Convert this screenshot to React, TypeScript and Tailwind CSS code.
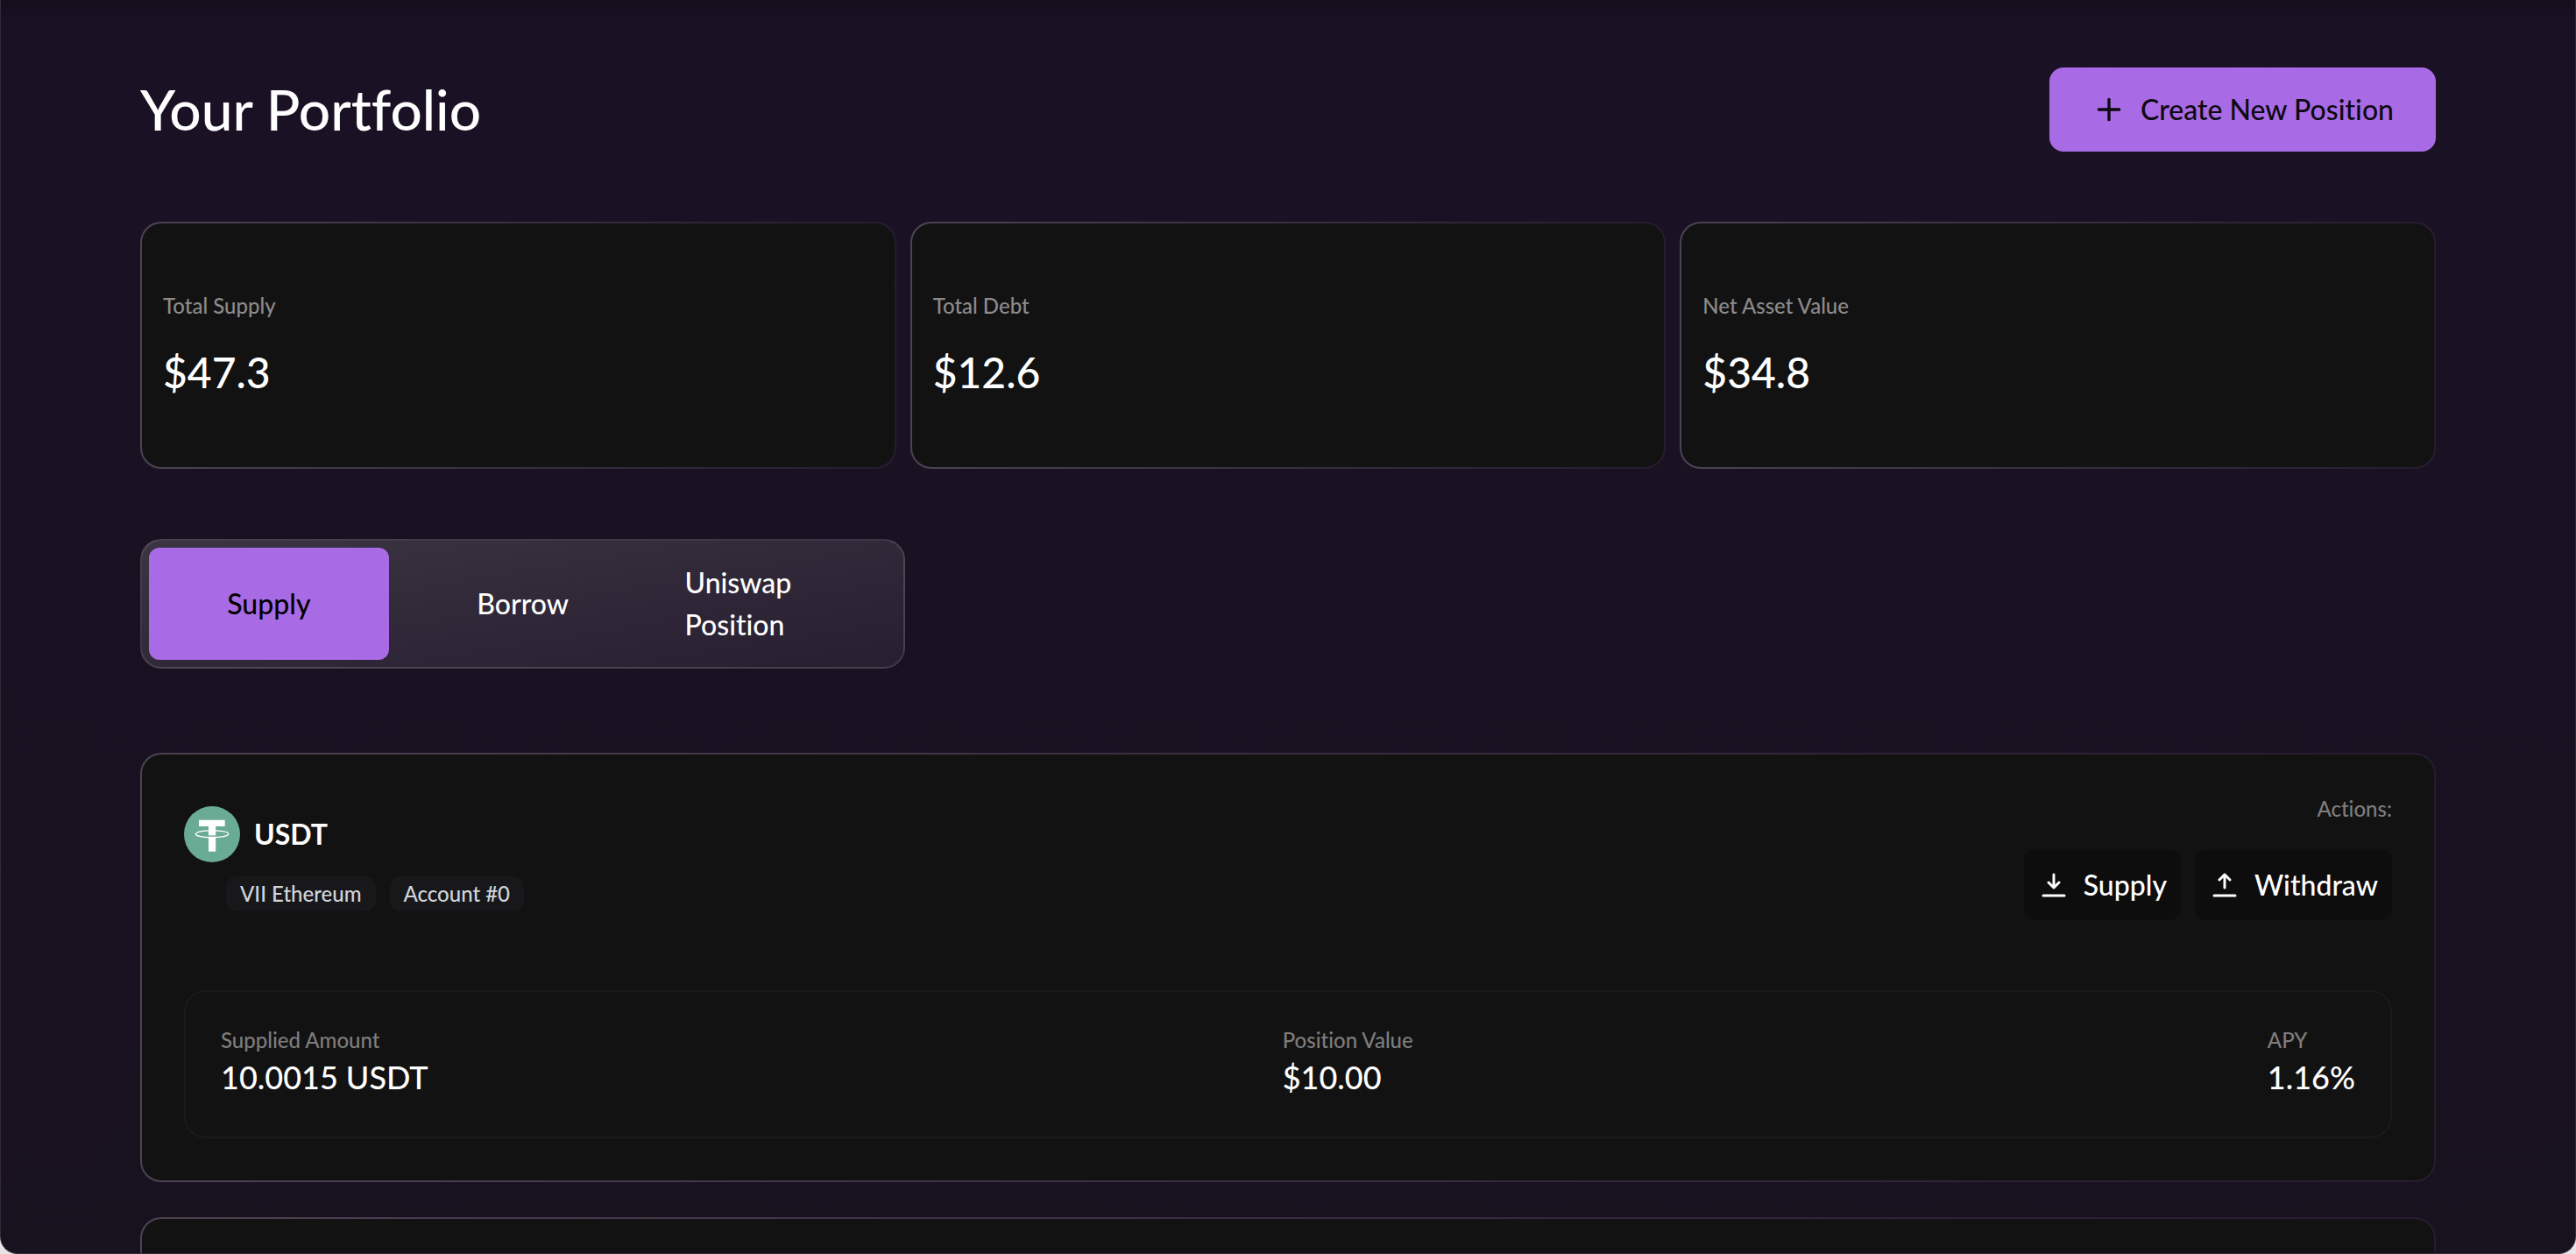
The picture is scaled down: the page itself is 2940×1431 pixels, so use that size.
import React, { useState } from 'react';
import { Plus } from 'lucide-react';

interface CardProps {
  children?: React.ReactNode;
}

const stats = [
  { label: 'Total Supply', value: '$47.3' },
  { label: 'Total Debt', value: '$12.6' },
  { label: 'Net Asset Value', value: '$34.8' },
];

const tabs = ['Supply', 'Borrow', 'Uniswap Position'];

const details = [
  { label: 'Supplied Amount', value: '10.0015 USDT' },
  { label: 'Position Value', value: '$10.00' },
  { label: 'APY', value: '1.16%' },
];

// Dark card with a border that fades out to the right
const Card: React.FC<CardProps> = ({ children }) => (
  <div className="rounded-3xl bg-linear-to-r from-[#4b4352] to-[#251d2e] p-0.5">
    <div className="h-full rounded-[22px] bg-[#121212]">{children}</div>
  </div>
);

const TetherLogo = () => (
  <svg viewBox="0 0 64 64" className="size-16" aria-hidden="true">
    <circle cx="32" cy="32" r="32" fill="#6aab96" />
    <path d="M17 15.700h29.700v7.200H36.200v28.900h-8.200V22.900H17z" fill="#fff" />
    <path d="M28 33.400h8.200v1.400H28z" fill="#6aab96" />
    <path
      d="M28 27.800C19 28.300 13.300 29.800 13.300 31.800C13.300 34 21.600 35.600 32 35.600S50.700 34 50.700 31.800C50.700 29.800 45 28.300 36 27.800"
      fill="none"
      stroke="#fff"
      strokeWidth="1.300"
    />
  </svg>
);

const ArrowIcon: React.FC<{ up?: boolean }> = ({ up }) => (
  <svg
    viewBox="0 0 36 36"
    className="size-9"
    fill="none"
    stroke="currentColor"
    strokeWidth="3"
    strokeLinecap="round"
    strokeLinejoin="round"
    aria-hidden="true"
  >
    <path d={up ? 'M18 21V6M12 12l6-6 6 6' : 'M18 6v15M12 15l6 6 6-6'} />
    <path d="M6 30h24" />
  </svg>
);

const App: React.FC = () => {
  const [activeTab, setActiveTab] = useState('Supply');

  return (
    <div className="h-screen overflow-hidden bg-[#e6e6e6] font-[Lato,sans-serif] font-medium [font-variant-ligatures:none]">
      <main className="h-full overflow-hidden rounded-b-[20px] border-x border-b border-[#332b3a] bg-linear-to-b from-[#150e1c] via-[#1b1125] via-2% to-[#18111e] px-[159px] pt-[77px] text-white">
        {/* Header */}
        <div className="flex items-center justify-between">
          <h1 className="text-[64px] leading-[80px]">Your Portfolio</h1>
          <button
            type="button"
            className="flex h-24 items-center gap-4 rounded-2xl bg-[#a96be5] px-12 text-[32px] text-[#0d0a12]"
          >
            <Plus className="size-10" />
            Create New Position
          </button>
        </div>

        {/* Totals */}
        <div className="mt-20 grid grid-cols-3 gap-4">
          {stats.map((stat) => (
            <Card key={stat.label}>
              <div className="flex flex-col gap-6 px-6 pt-[78px] pb-[72px]">
                <p className="text-2xl leading-8 text-[#8b8b8b]">{stat.label}</p>
                <p className="text-5xl leading-[72px]">{stat.value}</p>
              </div>
            </Card>
          ))}
        </div>

        {/* Tabs */}
        <div
          role="tablist"
          className="mt-20 grid w-1/3 grid-cols-3 gap-4 rounded-3xl border-2 border-white/10 bg-linear-to-br from-[#3b3441] to-[#271e30] p-2"
        >
          {tabs.map((tab) => (
            <button
              key={tab}
              type="button"
              role="tab"
              aria-selected={activeTab === tab}
              onClick={() => setActiveTab(tab)}
              className={`flex h-32 items-center justify-center rounded-xl px-8 text-left text-[32px] leading-[48px] ${
                activeTab === tab ? 'bg-[#a96be5] text-black' : 'text-white'
              }`}
            >
              {tab}
            </button>
          ))}
        </div>

        {/* Positions */}
        <div className="mt-24 flex flex-col gap-10">
          <Card>
            <div className="p-12">
              <div className="flex justify-between">
                <div className="pt-[11px]">
                  <div className="flex items-center gap-4">
                    <TetherLogo />
                    <h2 className="text-[32px] font-bold">USDT</h2>
                  </div>
                  <div className="mt-4 ml-12 flex gap-4 text-2xl leading-10 text-[#d1d5db]">
                    <span className="rounded-xl bg-[#18181b] px-4">VII Ethereum</span>
                    <span className="rounded-xl bg-[#18181b] px-4">Account #0</span>
                  </div>
                </div>
                <div className="flex flex-col items-end pb-20">
                  <p className="text-2xl leading-7 text-[#7d7d7d]">Actions:</p>
                  <div className="mt-[33px] flex gap-4 text-[32px]">
                    <button type="button" className="flex h-20 items-center gap-4 rounded-xl bg-[#0d0d0d] px-4">
                      <ArrowIcon />
                      Supply
                    </button>
                    <button type="button" className="flex h-20 items-center gap-4 rounded-xl bg-[#0d0d0d] px-4">
                      <ArrowIcon up />
                      Withdraw
                    </button>
                  </div>
                </div>
              </div>

              <dl className="flex justify-between rounded-3xl border-2 border-[#1a1a1a] px-10 pt-[41px] pb-[39px]">
                {details.map((detail) => (
                  <div key={detail.label}>
                    <dt className="text-2xl leading-7 text-[#7d7d7d]">{detail.label}</dt>
                    <dd className="text-4xl leading-[57px]">{detail.value}</dd>
                  </div>
                ))}
              </dl>
            </div>
          </Card>
          <Card>
            <div className="h-40" />
          </Card>
        </div>
      </main>
    </div>
  );
};

export default App;
